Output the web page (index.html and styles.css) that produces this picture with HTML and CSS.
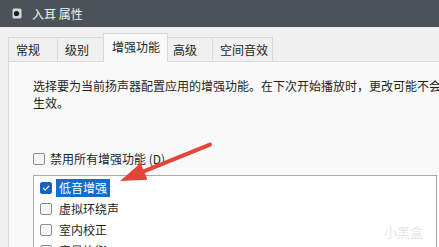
FILE: index.html
```html
<!DOCTYPE html>
<html lang="zh-CN">
<head>
    <meta charset="UTF-8">
    <title>入耳 属性</title>
    <link rel="stylesheet" href="styles.css">
</head>
<body>
    <!-- Barre de titre -->
    <div class="titlebar">
        <svg class="app-icon" width="10" height="11" viewBox="0 0 10 11">
            <rect x="0.5" y="0.5" width="9" height="10" rx="1.5" fill="#d6d6d6"/>
            <circle cx="4.5" cy="5.5" r="2.6" fill="#1b1b1b"/>
        </svg>
        <span>入耳 属性</span>
    </div>

    <!-- Onglets -->
    <div class="tabs">
        <div class="tab t1">常规</div>
        <div class="tab t2">级别</div>
        <div class="tab t3 active">增强功能</div>
        <div class="tab t4">高级</div>
        <div class="tab t5">空间音效</div>
    </div>

    <div class="panel">
        <p class="desc">选择要为当前扬声器配置应用的增强功能。在下次开始播放时，更改可能不会<br>生效。</p>

        <label class="row disable">
            <span class="box"></span>
            <span>禁用所有增强功能 (D)</span>
        </label>

        <div class="list">
            <div class="item">
                <span class="box checked">
                    <svg width="8" height="6" viewBox="0 0 8 6"><path d="M1 3 L3.2 5 L7 1" fill="none" stroke="#fff" stroke-width="1.1"/></svg>
                </span>
                <span class="label selected">低音增强</span>
            </div>
            <div class="item"><span class="box"></span><span class="label">虚拟环绕声</span></div>
            <div class="item"><span class="box"></span><span class="label">室内校正</span></div>
            <div class="item"><span class="box"></span><span class="label">音量均衡</span></div>
        </div>
    </div>

    <!-- Flèche d'annotation -->
    <svg class="arrow" width="439" height="247" viewBox="0 0 439 247">
        <line x1="140" y1="172.8" x2="210" y2="144.6" stroke="#e5443a" stroke-width="4" stroke-linecap="round"/>
        <polygon points="120,181 147.5,179.7 140.7,162.9" fill="#e5443a"/>
    </svg>

    <div class="watermark">小黑盒</div>
</body>
</html>
```

FILE: styles.css
```css
body { margin: 0; width: 439px; height: 247px; overflow: hidden; position: relative; background: #f0f0f0; font-family: "Noto Sans CJK SC", sans-serif; font-size: 12px; color: #1e1e1e; }

.titlebar { height: 27px; background: #4b5358; color: #f2f2f2; display: flex; align-items: center; gap: 10px; padding-left: 12px; line-height: 14px; }

.tabs { height: 34px; display: flex; align-items: flex-end; padding-left: 8px; }
.tab { height: 24px; box-sizing: border-box; border: 1px solid #d9d9d9; border-bottom: none; background: #f0f0f0; display: flex; align-items: center; padding-left: 7px; margin-left: -1px; line-height: 14px; }
.t1 { width: 50px; margin-left: 0; }
.t2 { width: 49px; }
.t3 { width: 65px; margin-left: -3px; }
.t4 { width: 48px; margin-left: -3px; }
.t5 { width: 61px; }
.tab.active { height: 29px; margin-bottom: -1px; background: #f9f9f9; position: relative; z-index: 1; padding-left: 8px; padding-bottom: 3px; }

.panel { margin-left: 8px; height: 200px; background: #f9f9f9; border-top: 1px solid #d9d9d9; border-left: 1px solid #d9d9d9; padding: 15px 0 0 24px; }
.desc { margin: 0; line-height: 17px; width: 412px; }

.row { display: flex; align-items: center; gap: 5px; height: 16px; line-height: 16px; }
.disable { margin-top: 40px; }

.box { width: 12px; height: 12px; box-sizing: border-box; border: 1px solid #8b8b8b; border-radius: 2px; background: #f6f6f6; display: flex; align-items: center; justify-content: center; }
.box.checked { background: #1463c4; border-color: #1463c4; }

.list { margin-top: 8px; width: 404px; height: 100px; box-sizing: border-box; border: 1px solid #a9a9a9; background: #fff; padding-top: 1px; }
.item { height: 21px; display: flex; align-items: center; gap: 4px; padding-left: 6px; }
.label { padding: 0 3px; line-height: 18px; }
.label.selected { background: #166bcc; color: #fff; }

.arrow { position: absolute; left: 0; top: 0; pointer-events: none; }
.watermark { position: absolute; right: 16px; bottom: 6px; font-size: 13px; color: #e6e6e6; }
```
